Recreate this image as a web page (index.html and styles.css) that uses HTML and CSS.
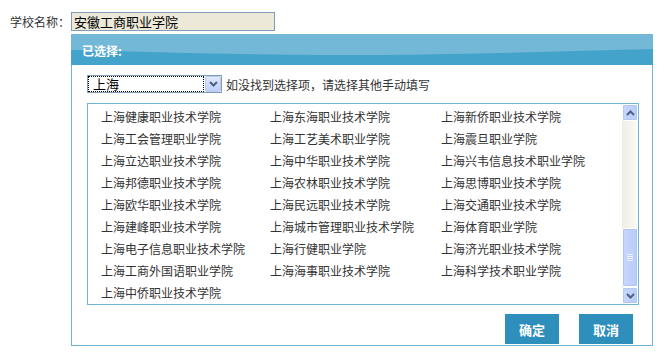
FILE: index.html
```html
<!DOCTYPE html>
<html lang="zh">
<head>
<meta charset="utf-8">
<title>学校名称</title>
<link rel="stylesheet" href="styles.css">
</head>
<body>
<div class="top">
  <span class="label">学校名称：</span>
  <div class="name-input">安徽工商职业学院</div>
</div>
<div class="panel">
  <div class="head">
    <svg class="head-bg" width="582" height="31" viewBox="0 0 582 31" preserveAspectRatio="none">
      <rect x="0" y="0" width="582" height="31" fill="#44a3cb"/>
      <path d="M0 0 H582 V15 C500 17 380 21 270 21 C150 21 60 17 0 16 Z" fill="#74b8d7"/>
    </svg>
    <span class="head-title">已选择:</span>
  </div>
  <div class="body">
    <div class="select-row">
      <div class="select">
        <div class="select-value">上海</div>
        <div class="select-btn">
          <svg width="9" height="6" viewBox="0 0 9 6"><polyline points="1,1 4.5,4.5 8,1" fill="none" stroke="#4d6185" stroke-width="2"/></svg>
        </div>
      </div>
      <span class="hint">如没找到选择项，请选择其他手动填写</span>
    </div>
    <div class="listbox">
      <div class="items">
        <span>上海健康职业技术学院</span><span>上海东海职业技术学院</span><span>上海新侨职业技术学院</span>
        <span>上海工会管理职业学院</span><span>上海工艺美术职业学院</span><span>上海震旦职业学院</span>
        <span>上海立达职业技术学院</span><span>上海中华职业技术学院</span><span>上海兴韦信息技术职业学院</span>
        <span>上海邦德职业技术学院</span><span>上海农林职业技术学院</span><span>上海思博职业技术学院</span>
        <span>上海欧华职业技术学院</span><span>上海民远职业技术学院</span><span>上海交通职业技术学院</span>
        <span>上海建峰职业技术学院</span><span>上海城市管理职业技术学院</span><span>上海体育职业学院</span>
        <span>上海电子信息职业技术学院</span><span>上海行健职业学院</span><span>上海济光职业技术学院</span>
        <span>上海工商外国语职业学院</span><span>上海海事职业技术学院</span><span>上海科学技术职业学院</span>
        <span>上海中侨职业技术学院</span>
      </div>
      <div class="scrollbar">
        <div class="sb-btn">
          <svg width="9" height="6" viewBox="0 0 9 6"><polyline points="1,5 4.5,1.5 8,5" fill="none" stroke="#4d6185" stroke-width="2"/></svg>
        </div>
        <div class="sb-track">
          <div class="sb-thumb">
            <span class="grip"></span><span class="grip"></span><span class="grip"></span><span class="grip"></span>
          </div>
        </div>
        <div class="sb-btn">
          <svg width="9" height="6" viewBox="0 0 9 6"><polyline points="1,1 4.5,4.5 8,1" fill="none" stroke="#4d6185" stroke-width="2"/></svg>
        </div>
      </div>
    </div>
    <div class="actions">
      <button class="btn">确定</button>
      <button class="btn">取消</button>
    </div>
  </div>
</div>
</body>
</html>
```
FILE: styles.css
```css
* { box-sizing: border-box; }
body {
  margin: 0;
  font-family: "Noto Sans CJK SC", "Liberation Sans", sans-serif;
  font-size: 12px;
  color: #333;
  background: #fff;
}
.top {
  display: flex;
  align-items: center;
  padding: 12px 0 0 10px;
  height: 31px;
}
.label {
  width: 61px;
  line-height: 19px;
  color: #333;
}
.name-input {
  width: 204px;
  height: 19px;
  border: 1px solid #7f9db9;
  background: #ece9d8;
  font-size: 13px;
  line-height: 17px;
  padding-left: 2px;
  color: #000;
}
.panel {
  margin: 3px 0 0 71px;
  width: 582px;
  height: 312px;
  border: 1px solid #72b4d6;
  border-top: none;
}
.head {
  position: relative;
  height: 31px;
  margin: 0 -1px;
  padding: 1px 0 0 11px;
  line-height: 31px;
}
.head-bg {
  position: absolute;
  left: 0;
  top: 0;
  display: block;
}
.head-title {
  position: relative;
  color: #fff;
  font-weight: bold;
  font-size: 12px;
}
.body {
  padding: 10px 19px 0 15px;
}
.select-row {
  display: flex;
  align-items: center;
  height: 18px;
}
.select {
  display: flex;
  width: 135px;
  height: 18px;
  border: 1px solid #7f9db9;
  background: #fff;
}
.select-value {
  flex: 1;
  border: 1px dotted #000;
  font-size: 13px;
  line-height: 14px;
  padding-left: 4px;
  color: #000;
}
.select-btn {
  width: 16px;
  margin-left: 1px;
  border: 1px solid #b9c9ef;
  border-radius: 2px;
  background: linear-gradient(#dfe8fd, #bccffa);
  display: flex;
  align-items: center;
  justify-content: center;
}
.hint {
  margin-left: 4px;
  color: #333;
}
.listbox {
  display: flex;
  margin-top: 10px;
  width: 552px;
  height: 202px;
  border: 1px solid #72b4d6;
}
.items {
  flex: 1;
  display: grid;
  grid-template-columns: 169px 171px 1fr;
  grid-auto-rows: 22px;
  align-content: start;
  padding: 2px 0 0 13px;
  line-height: 22px;
  color: #333;
  white-space: nowrap;
}
.scrollbar {
  width: 16px;
  display: flex;
  flex-direction: column;
  background: linear-gradient(to right, #eeede5, #fbfbf8);
}
.sb-btn {
  height: 17px;
  border: 1px solid #fff;
  border-radius: 2px;
  background: linear-gradient(to right, #c7d6fc, #b9cdf9);
  box-shadow: inset 0 0 0 1px #b4c7f2;
  display: flex;
  align-items: center;
  justify-content: center;
}
.sb-track {
  flex: 1;
}
.sb-thumb {
  margin-top: 107px;
  height: 59px;
  border: 1px solid #fff;
  border-radius: 2px;
  background: linear-gradient(to right, #c8d7fd, #b8cbf9);
  box-shadow: inset 0 0 0 1px #b1c5f3;
  display: flex;
  flex-direction: column;
  align-items: center;
  justify-content: center;
  gap: 1px;
}
.grip {
  display: block;
  width: 6px;
  height: 1px;
  background: #eef3fe;
}
.actions {
  display: flex;
  justify-content: flex-end;
  gap: 20px;
  margin-top: 9px;
}
.btn {
  width: 54px;
  height: 30px;
  border: none;
  background: #2e8fbd;
  color: #fff;
  font-family: "Noto Sans CJK SC", sans-serif;
  font-size: 13px;
  font-weight: bold;
  padding: 0;
}
```
